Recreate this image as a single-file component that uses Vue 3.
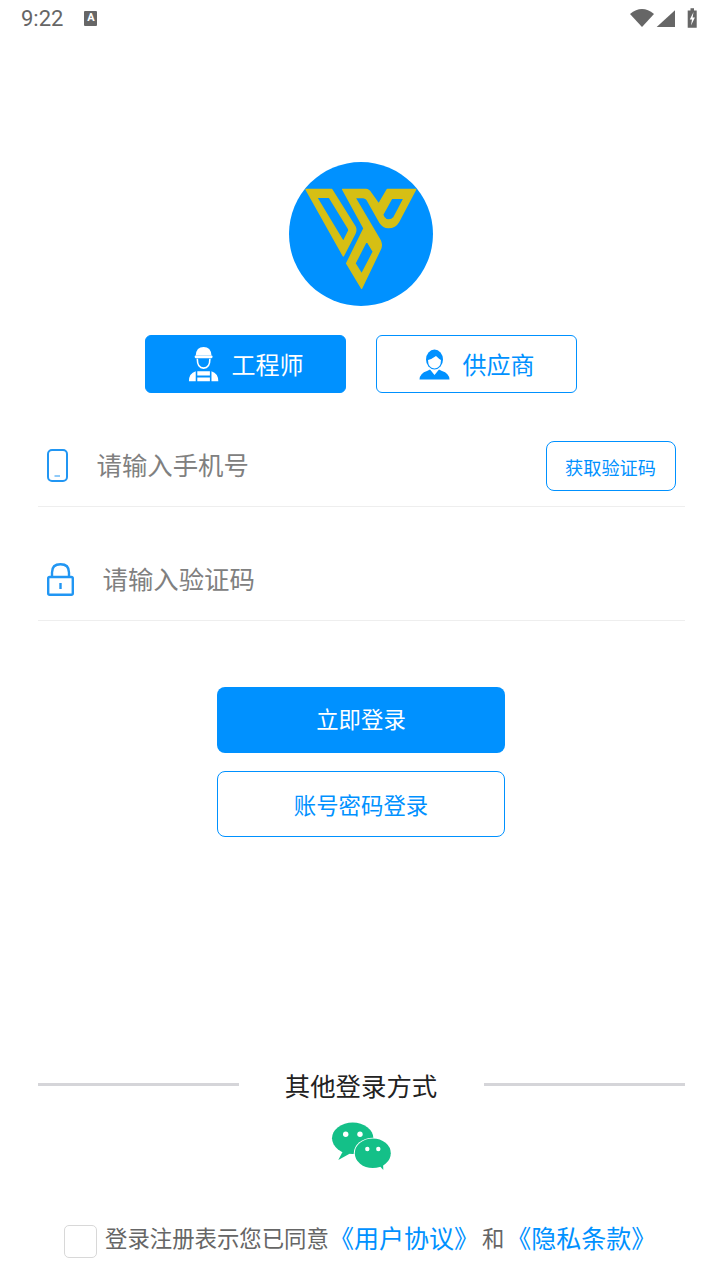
<template>
  <div class="page">
    <div class="status-bar">
      <div class="status-left">
        <span class="clock">9:22</span>
        <span class="notice">A</span>
      </div>
      <svg class="status-icons" width="72" height="22" viewBox="628 6 72 22">
        <path d="M630 13 Q642 3 654 13 L642 26 Z" fill="#666" />
        <path d="M656.7 26 L675 9.3 V26 Z" fill="#666" />
        <path d="M687.7 9.5 H690.5 V7.3 H694 V9.5 H696.7 V26.7 H687.7 Z" fill="#666" />
        <path d="M693.5 11 L689.8 18.6 H692 L691 24.5 L694.9 16.4 H692.6 Z" fill="#fff" />
      </svg>
    </div>

    <svg class="logo" width="144" height="144" viewBox="-33 -54 432 432">
      <circle cx="183" cy="162" r="216" fill="#0091ff" />
      <path
        fill="#d6bf14"
        stroke="#d6bf14"
        stroke-width="4"
        stroke-linejoin="round"
        fill-rule="evenodd"
        d="M18 28 H95 L165 140 Q170 150 165 160 L130 228 Z M50 52 L130 185 L145 155 Q148 150 145 145 L88 52 Z"
      />
      <path
        fill="#d6bf14"
        stroke="#d6bf14"
        stroke-width="4"
        stroke-linejoin="round"
        fill-rule="evenodd"
        d="M128 28 H198 Q206 28 212 38 L236 72 L262 28 H347 L296 125 Q286 143 265 143 Q250 143 240 128 L204 64 Q198 53 188 53 H165 L240 180 Q248 195 240 210 L185 325 L140 250 L192 145 Z
           M275 55 H312 L282 112 Q272 124 258 118 Q250 112 248 104 Z
           M165 250 L200 182 L220 215 L185 282 Z"
      />
    </svg>

    <div class="roles">
      <div class="role active">
        <svg width="45" height="45" viewBox="0 0 45 45">
          <g transform="translate(-0.500 -1.200) scale(1.050)" fill="#fff">
            <path d="M14.500 14 Q15 6 22 6 Q29 6 29.500 14 Z" />
            <rect x="13.500" y="14" width="17" height="2.500" rx="1" />
            <path d="M16 17 Q16 26 22 26 Q28 26 28 17" fill="none" stroke="#fff" stroke-width="1.500" />
            <path d="M8 38.500 Q8 31 14.500 29 V38.500 Z M36 38.500 Q36 31 29.500 29 V38.500 Z" />
            <path d="M16 29 H28 V33 H16 Z M16 35 H28 V38.500 H16 Z" />
          </g>
        </svg>
        <span>工程师</span>
      </div>
      <div class="role">
        <svg width="45" height="45" viewBox="0 0 45 45">
          <ellipse cx="22.500" cy="17.500" rx="8.500" ry="10" fill="#0091ff" />
          <path d="M16 18 Q20 17 24 14 Q27 17 29 18 Q29 26 22.500 26.500 Q16 26 16 18 Z" fill="#fff" />
          <path d="M7.500 37.500 Q8 31 15 29 L18 27.500 L22.500 33 L27 27.500 L30 29 Q37 31 37.500 37.500 Z" fill="#0091ff" />
        </svg>
        <span>供应商</span>
      </div>
    </div>

    <div class="field first">
      <svg class="phone" width="21" height="33" viewBox="0 0 21 33" fill="none" stroke="#2196f3" stroke-width="2">
        <rect x="1" y="1" width="19" height="31" rx="4" />
        <path d="M7.500 27 H13" stroke-width="1" />
      </svg>
      <span class="placeholder">请输入手机号</span>
      <div class="code-btn">获取验证码</div>
    </div>

    <div class="field">
      <svg width="27" height="33" viewBox="0 0 27 33" fill="none" stroke="#2196f3" stroke-width="2.400">
        <rect x="1.200" y="14" width="24.600" height="17.800" rx="1.500" />
        <path d="M5 14 V9.500 Q5 1.300 13.500 1.300 Q22 1.300 22 9.500 V14" />
        <path d="M13.500 20 V26" />
      </svg>
      <span class="placeholder">请输入验证码</span>
    </div>

    <div class="btn primary">立即登录</div>
    <div class="btn outline">账号密码登录</div>

    <div class="other">
      <i class="line"></i>
      <span>其他登录方式</span>
      <i class="line"></i>
    </div>

    <svg class="wechat" width="60" height="50" viewBox="0 0 60 50">
      <path d="M12 29 L7.300 38 L19 31.500 Z" fill="#14c088" />
      <ellipse cx="21.700" cy="16.300" rx="20.700" ry="15.700" fill="#14c088" />
      <circle cx="14.700" cy="12.300" r="2.700" fill="#fff" />
      <circle cx="29" cy="12.300" r="2.700" fill="#fff" />
      <ellipse cx="41.800" cy="31.300" rx="19" ry="15.500" fill="#fff" />
      <path d="M47 42 L52.300 48 L52 40 Z" fill="#14c088" />
      <ellipse cx="41.800" cy="31.300" rx="18" ry="14.800" fill="#14c088" />
      <circle cx="36.300" cy="27" r="2.200" fill="#fff" />
      <circle cx="47.300" cy="27" r="2.200" fill="#fff" />
    </svg>

    <div class="agree">
      <i class="checkbox"></i>
      <span>登录注册表示您已同意</span>
      <a>《用户协议》</a>
      <span class="and">和</span>
      <a>《隐私条款》</a>
    </div>
  </div>
</template>

<script setup>
</script>

<style>
body {
  background: #fff;
}
</style>

<style scoped>
.page {
  width: 720px;
  height: 1280px;
  box-sizing: border-box;
  padding-left: 2px;
  display: flex;
  flex-direction: column;
  align-items: center;
  overflow: hidden;
  background: #fff;
  font-family: "Noto Sans CJK SC", "Noto Sans", sans-serif;
}

.status-bar {
  width: 720px;
  height: 36px;
  box-sizing: border-box;
  flex-shrink: 0;
  margin-left: -2px;
  padding: 0 20px 0 21px;
  display: flex;
  justify-content: space-between;
  align-items: center;
}

.status-left {
  display: flex;
  align-items: center;
  gap: 21px;
}

.clock {
  font-family: Roboto, sans-serif;
  font-size: 22px;
  color: #666;
}

.notice {
  width: 13px;
  height: 15px;
  background: #666;
  border-radius: 1px;
  color: #fff;
  font-family: Roboto, sans-serif;
  font-size: 11px;
  font-weight: 700;
  line-height: 13px;
  text-align: center;
}

.logo {
  margin-top: 126px;
  display: block;
  flex-shrink: 0;
}

.roles {
  margin-top: 29px;
  display: flex;
  gap: 30px;
}

.role {
  width: 201px;
  height: 58px;
  box-sizing: border-box;
  padding-right: 7px;
  border: 1px solid #0091ff;
  border-radius: 6px;
  display: flex;
  align-items: center;
  justify-content: center;
  gap: 6px;
  font-size: 24px;
  color: #0091ff;
}

.role span {
  margin-bottom: 1px;
}

.role.active {
  background: #0091ff;
  color: #fff;
}

.field {
  width: 647px;
  height: 78px;
  box-sizing: border-box;
  margin-top: 36px;
  padding-left: 9px;
  padding-bottom: 5px;
  border-bottom: 1px solid #eee;
  display: flex;
  align-items: center;
  gap: 29px;
}

.field.first {
  margin-top: 35px;
  height: 79px;
  padding-right: 9px;
  padding-bottom: 2px;
}

.phone {
  margin-bottom: 2px;
}

.placeholder {
  margin-bottom: 3px;
  font-size: 25.400px;
  color: #808080;
}

.first .placeholder {
  margin-bottom: 5px;
}

.code-btn {
  margin-left: auto;
  width: 130px;
  height: 50px;
  box-sizing: border-box;
  padding-top: 1px;
  border: 1px solid #0091ff;
  border-radius: 8px;
  display: flex;
  align-items: center;
  justify-content: center;
  font-size: 18.200px;
  color: #0091ff;
}

.btn {
  width: 288px;
  height: 66px;
  flex-shrink: 0;
  box-sizing: border-box;
  border-radius: 8px;
  display: flex;
  align-items: center;
  justify-content: center;
  font-size: 22.400px;
}

.btn.primary {
  margin-top: 66px;
  padding-bottom: 4px;
  background: #0091ff;
  color: #fff;
}

.btn.outline {
  margin-top: 18px;
  border: 1px solid #0091ff;
  color: #0091ff;
}

.other {
  width: 647px;
  margin-top: 230px;
  display: flex;
  align-items: center;
  justify-content: space-between;
  font-size: 25.400px;
  color: #222;
}

.other span {
  margin-bottom: 4px;
}

.line {
  width: 201px;
  height: 3px;
  margin-top: -6px;
  background: #d5d5d9;
}

.wechat {
  margin-top: 15px;
  margin-left: -1px;
  display: block;
  flex-shrink: 0;
}

.agree {
  width: 100%;
  box-sizing: border-box;
  margin-top: 47px;
  padding-left: 62px;
  display: flex;
  align-items: center;
  font-size: 22.400px;
  color: #666;
}

.agree span,
.agree a {
  margin-bottom: 8px;
}

.checkbox {
  width: 33px;
  height: 33px;
  box-sizing: border-box;
  margin-right: 8px;
  border: 1px solid #d8d8d8;
  border-radius: 5px;
}

.agree a {
  font-size: 25px;
  color: #0091ff;
}

.agree .and {
  margin-left: 3px;
  margin-right: 2px;
}
</style>
